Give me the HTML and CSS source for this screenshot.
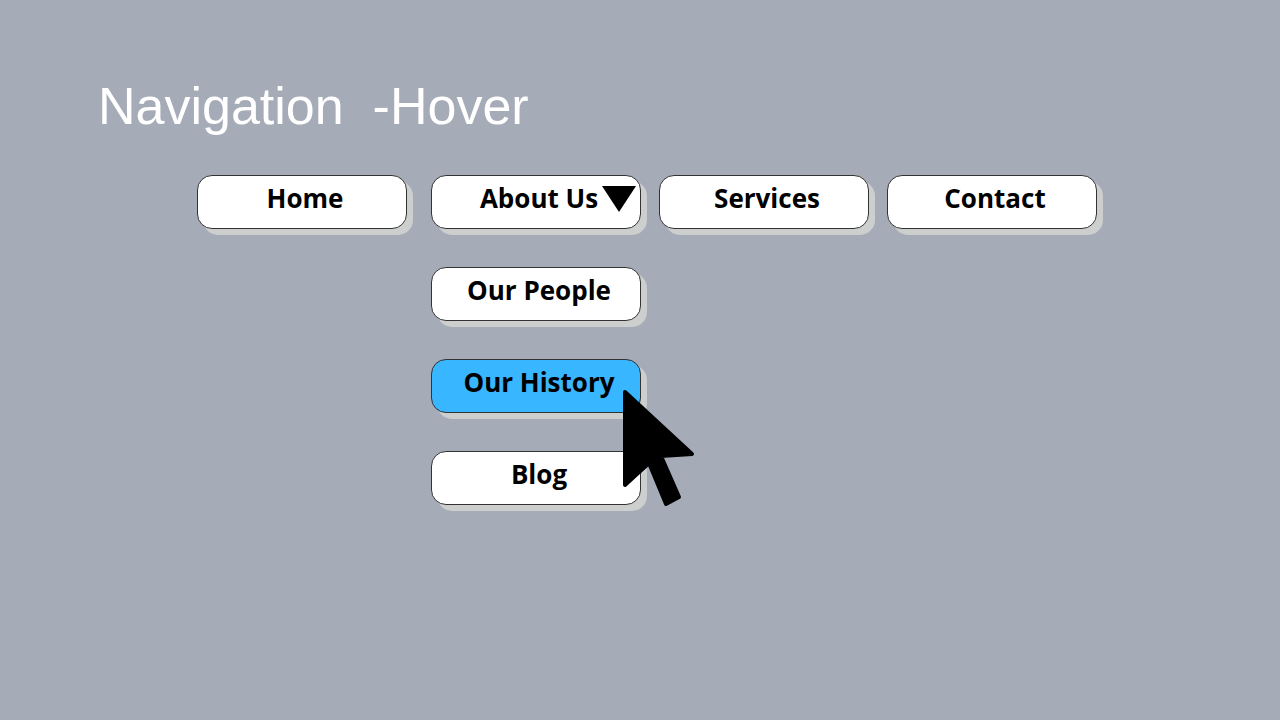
FILE: index.html
```
<!DOCTYPE html>
<html lang="en">
  <head>
    <meta charset="UTF-8" />
    <meta name="viewport" content="width=device-width, initial-scale=1.0" />
    <title>Navigation - Hover</title>
    <link rel="stylesheet" href="styles.css">
  </head>
  <body>
    <h1 class="title">Navigation  -Hover</h1>

    <nav>
      <ul class="menu">
        <li class="menu-first"><a class="nav-link" href="#">Home</a></li>
        <li class="dropdown">
          <a class="nav-link" href="#">About Us
            <svg class="caret" viewBox="0 0 34 26" aria-hidden="true">
              <path d="M0 0H34L17 26Z" />
            </svg>
          </a>
          <ul class="submenu">
            <li><a class="nav-link" href="#">Our People</a></li>
            <li>
              <a class="nav-link active" href="#">Our History</a>
              <svg class="cursor" viewBox="0 0 76 124" aria-hidden="true">
                <path d="M5 7L72 69L41 71L59 112L46 119L29 78L5 100Z" />
              </svg>
            </li>
            <li><a class="nav-link" href="#">Blog</a></li>
          </ul>
        </li>
        <li><a class="nav-link" href="#">Services</a></li>
        <li><a class="nav-link" href="#">Contact</a></li>
      </ul>
    </nav>
  </body>
</html>
```
FILE: styles.css
```
body {
  margin: 0;
  padding: 76px 98px;
  background-color: #a6abb8;
  font-family: "Open Sans", sans-serif;
}

.title {
  margin: 0 0 39px;
  color: white;
  font-family: "Liberation Sans", Arial, sans-serif;
  font-size: 52px;
  font-weight: normal;
  line-height: 60px;
  white-space: pre;
}

ul {
  margin: 0;
  padding: 0;
  list-style: none;
}

li {
  position: relative;
}

.menu {
  display: flex;
  align-items: flex-start;
  gap: 18px;
  padding-left: 99px;
}

.menu-first {
  margin-right: 6px;
}

.submenu {
  display: flex;
  flex-direction: column;
  gap: 38px;
  margin-top: 38px;
}

.nav-link {
  display: block;
  position: relative;
  box-sizing: border-box;
  width: 210px;
  padding: 4px 0 12px 6px;
  border: 1px solid #333;
  border-radius: 15px;
  background: white;
  box-shadow: 6px 6px 0 #cdcfce;
  color: black;
  font-size: 26px;
  font-weight: bold;
  line-height: 36px;
  text-align: center;
  text-decoration: none;
}

.nav-link:hover,
.nav-link.active {
  background: #38b6ff;
}

.caret {
  position: absolute;
  top: 10px;
  right: 4px;
  width: 34px;
  height: 26px;
}

/* mouse pointer over the hovered item */
.cursor {
  position: absolute;
  top: 26px;
  left: 189px;
  z-index: 1;
  width: 76px;
  height: 124px;
  stroke: black;
  stroke-width: 4px;
  stroke-linejoin: round;
  pointer-events: none;
}
```
